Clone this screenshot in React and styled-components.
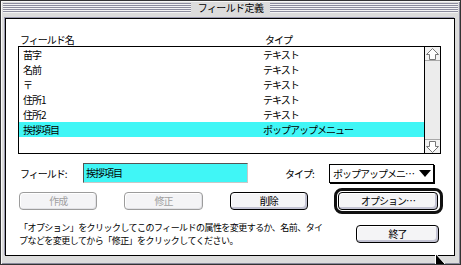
import React from 'react';
import styled, { createGlobalStyle } from 'styled-components';

const GlobalStyle = createGlobalStyle`
  html, body { margin: 0; padding: 0; background: #fff; }
  body {
    font-family: "Noto Sans CJK JP", "Noto Sans", sans-serif;
    font-size: 10px;
    letter-spacing: -1px;
    color: #000;
  }
  * { box-sizing: border-box; }
`;

const Window = styled.div`
  position: relative;
  width: 461px;
  height: 265px;
  background: #dcdcdc;
  border: 1px solid #333;
  box-shadow: inset 1px 1px 0 #f8f8f8, inset -1px -1px 0 #8a8a9c;
  display: flex;
  flex-direction: column;
  overflow: hidden;
`;

const TitleBar = styled.div`
  height: 17px;
  display: flex;
  align-items: flex-start;
  padding: 2px 2px 0 2px;
`;

const Stripes = styled.div`
  flex: 1;
  height: 10px;
  background: repeating-linear-gradient(
    to bottom,
    #8c8c9e 0 1px,
    #f4f4f4 1px 2px
  );
`;

const Title = styled.div`
  padding: 0 7px;
  height: 10px;
  line-height: 10px;
  letter-spacing: -0.6px;
`;

const Content = styled.div`
  flex: 1;
  margin: 0 5px 8px 4px;
  background: #fff;
  border: 1px solid #000;
  box-shadow: -1px -1px 0 #9a9ab0;
  display: flex;
  flex-direction: column;
  padding: 15px 11px 0 12px;
`;

const LabelsRow = styled.div`
  display: grid;
  grid-template-columns: 245px auto;
  height: 12px;
  line-height: 12px;
  padding-left: 2px;
`;

const ListBox = styled.div`
  width: 423px;
  height: 108px;
  border: 1px solid #000;
  display: flex;
`;

const Rows = styled.div`
  flex: 1;
  display: flex;
  flex-direction: column;
`;

const Row = styled.div`
  height: 15px;
  line-height: 15px;
  display: grid;
  grid-template-columns: 240px 1fr;
  padding-left: 4px;
  background: ${(p) => (p.$selected ? '#40f6f6' : 'transparent')};
`;

const ScrollBar = styled.div`
  width: 16px;
  border-left: 1px solid #000;
  background: #ececec;
  display: flex;
  flex-direction: column;
  justify-content: space-between;
`;

const ScrollArrow = styled.div`
  height: 14px;
  display: flex;
  align-items: center;
  justify-content: center;
  background: #f2f2f2;
  border-${(p) => (p.$down ? 'top' : 'bottom')}: 1px solid #a8a8a8;
`;

const FieldRow = styled.div`
  margin-top: 9px;
  height: 20px;
  display: flex;
  align-items: center;
`;

const FieldLabel = styled.div`
  width: 65px;
  padding-left: 2px;
`;

const TextInput = styled.div`
  width: 165px;
  height: 20px;
  line-height: 18px;
  background: #40f6f6;
  border: 1px solid;
  border-color: #555 #c8c8c8 #c8c8c8 #555;
  padding-left: 2px;
`;

const TypeLabel = styled.div`
  margin-left: 37px;
  width: 44px;
`;

const Popup = styled.div`
  width: 105px;
  height: 19px;
  border: 1px solid #000;
  box-shadow: 1px 1px 0 #000;
  background: #fff;
  display: flex;
  align-items: center;
  justify-content: space-between;
  padding: 0 2px 0 3px;
`;

const ButtonRow = styled.div`
  margin-top: 5px;
  height: 26px;
  display: flex;
  align-items: center;
  padding-left: 1px;
`;

const Button = styled.div`
  width: ${(p) => p.$w || 79}px;
  height: 18px;
  margin-left: ${(p) => p.$ml || 0}px;
  border: 1px solid ${(p) => (p.$disabled ? '#9c9c9c' : '#000')};
  border-radius: 4px;
  background: #f4f4f6;
  box-shadow: ${(p) =>
    p.$disabled
      ? 'inset -1px -1px 0 #e2e2e6, inset 1px 1px 0 #fff'
      : 'inset -2px -2px 0 #c2c2d2, inset 1px 1px 0 #fff'};
  color: ${(p) => (p.$disabled ? '#a0a0a0' : '#000')};
  display: flex;
  align-items: center;
  justify-content: center;
  line-height: 1;
`;

const DefaultRing = styled.div`
  margin-left: ${(p) => p.$ml}px;
  width: 110px;
  height: 26px;
  border: 3px solid #111;
  border-radius: 8px;
  padding: 1px;
  display: flex;
`;

const HelpRow = styled.div`
  margin-top: 7px;
  display: flex;
  align-items: center;
`;

const HelpText = styled.div`
  width: 338px;
  padding-left: 1px;
  font-size: 9px;
  line-height: 13px;
  letter-spacing: -0.55px;
`;

const HelpLine = styled.span`
  display: block;
  white-space: nowrap;
`;

const Cursor = styled.svg`
  position: absolute;
  left: 434px;
  top: 252px;
`;

const rows = [
  ['苗字', 'テキスト'],
  ['名前', 'テキスト'],
  ['〒', 'テキスト'],
  ['住所1', 'テキスト'],
  ['住所2', 'テキスト'],
  ['挨拶項目', 'ポップアップメニュー'],
];

const UpArrow = () => (
  <svg width="13" height="12" viewBox="0 0 13 12">
    <path d="M6.5 0.5 L12.5 6.5 L9.5 6.5 L9.5 11.5 L3.5 11.5 L3.5 6.5 L0.5 6.5 Z" fill="#fff" stroke="#777" strokeWidth="1" />
  </svg>
);

const DownArrow = () => (
  <svg width="13" height="12" viewBox="0 0 13 12">
    <path d="M6.5 11.5 L12.5 5.5 L9.5 5.5 L9.5 0.5 L3.5 0.5 L3.5 5.5 L0.5 5.5 Z" fill="#fff" stroke="#777" strokeWidth="1" />
  </svg>
);

export default function App() {
  return (
    <>
      <GlobalStyle />
      <Window>
        <TitleBar>
          <Stripes />
          <Title>フィールド定義</Title>
          <Stripes />
        </TitleBar>
        <Content>
          <LabelsRow>
            <span>フィールド名</span>
            <span>タイプ</span>
          </LabelsRow>
          <ListBox>
            <Rows>
              {rows.map(([name, type], i) => (
                <Row key={name} $selected={i === rows.length - 1}>
                  <span>{name}</span>
                  <span>{type}</span>
                </Row>
              ))}
            </Rows>
            <ScrollBar>
              <ScrollArrow>
                <UpArrow />
              </ScrollArrow>
              <ScrollArrow $down>
                <DownArrow />
              </ScrollArrow>
            </ScrollBar>
          </ListBox>
          <FieldRow>
            <FieldLabel>フィールド:</FieldLabel>
            <TextInput>挨拶項目</TextInput>
            <TypeLabel>タイプ:</TypeLabel>
            <Popup>
              <span>ポップアップメニ…</span>
              <svg width="12" height="7" viewBox="0 0 12 7">
                <path d="M0 0 L12 0 L6 7 Z" fill="#000" />
              </svg>
            </Popup>
          </FieldRow>
          <ButtonRow>
            <Button $disabled>作成</Button>
            <Button $disabled $ml={27}>修正</Button>
            <Button $ml={27}>削除</Button>
            <DefaultRing $ml={26}>
              <Button $w={100}>オプション…</Button>
            </DefaultRing>
          </ButtonRow>
          <HelpRow>
            <HelpText>
              <HelpLine>「オプション」をクリックしてこのフィールドの属性を変更するか、名前、タイ</HelpLine>
              <HelpLine>プなどを変更してから「修正」をクリックしてください。</HelpLine>
            </HelpText>
            <Button $w={83}>終了</Button>
          </HelpRow>
        </Content>
        <Cursor width="12" height="19" viewBox="0 0 12 19">
          <path d="M0.5 0.5 L0.5 15.5 L4 12 L6.5 18 L8.5 17 L6 11.5 L10.5 11.5 Z" fill="#000" stroke="#fff" strokeWidth="1" />
        </Cursor>
      </Window>
    </>
  );
}
